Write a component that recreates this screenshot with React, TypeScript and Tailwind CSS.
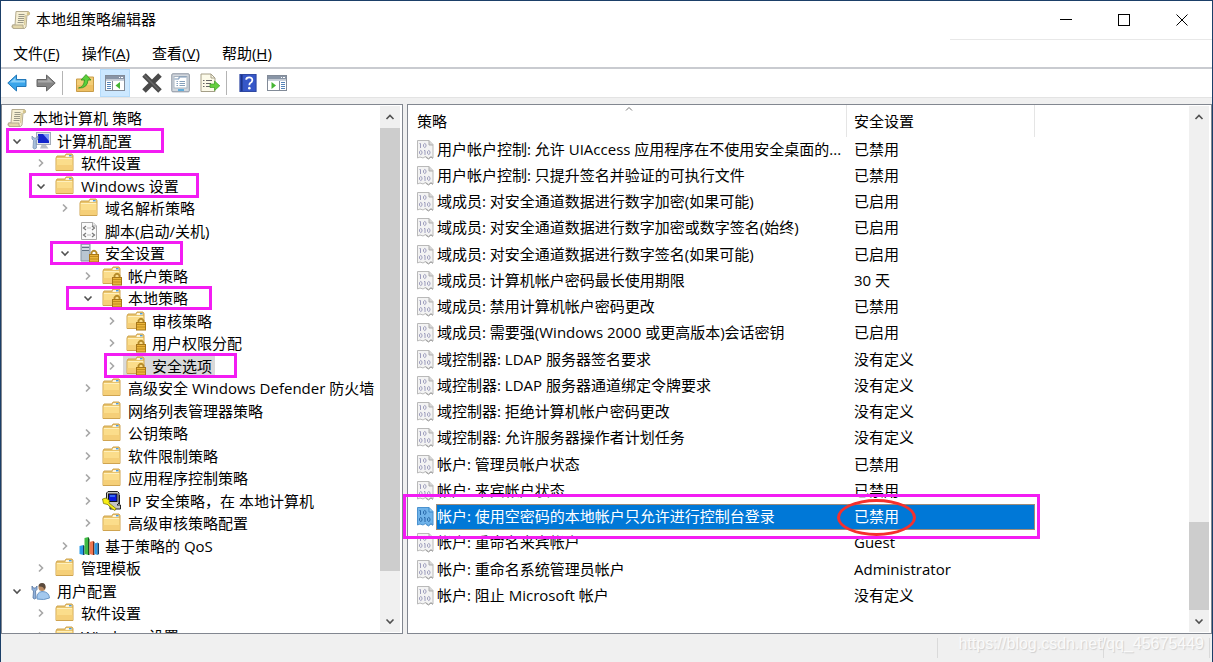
import { useState } from "react";
import type { ReactNode } from "react";

type IconName =
    | "scroll"
    | "computer"
    | "folder"
    | "script"
    | "server"
    | "lockedFolder"
    | "ipsec"
    | "chart"
    | "user";

type TreeNode = {
    label: string;
    level: number;
    icon: IconName;
    state?: "open" | "closed";
    mark?: string;
};

const tree: TreeNode[] = [
    { label: "本地计算机 策略", level: 0, icon: "scroll" },
    { label: "计算机配置", level: 1, icon: "computer", state: "open", mark: "left-1 w-[158px]" },
    { label: "软件设置", level: 2, icon: "folder", state: "closed" },
    { label: "Windows 设置", level: 2, icon: "folder", state: "open", mark: "left-[27px] w-[170px]" },
    { label: "域名解析策略", level: 3, icon: "folder", state: "closed" },
    { label: "脚本(启动/关机)", level: 3, icon: "script" },
    { label: "安全设置", level: 3, icon: "server", state: "open", mark: "left-12 w-[133px]" },
    { label: "帐户策略", level: 4, icon: "lockedFolder", state: "closed" },
    { label: "本地策略", level: 4, icon: "lockedFolder", state: "open", mark: "left-16 w-[146px]" },
    { label: "审核策略", level: 5, icon: "lockedFolder", state: "closed" },
    { label: "用户权限分配", level: 5, icon: "lockedFolder", state: "closed" },
    { label: "安全选项", level: 5, icon: "lockedFolder", state: "closed", mark: "left-[102px] w-[133px]" },
    { label: "高级安全 Windows Defender 防火墙", level: 4, icon: "folder", state: "closed" },
    { label: "网络列表管理器策略", level: 4, icon: "folder" },
    { label: "公钥策略", level: 4, icon: "folder", state: "closed" },
    { label: "软件限制策略", level: 4, icon: "folder", state: "closed" },
    { label: "应用程序控制策略", level: 4, icon: "folder", state: "closed" },
    { label: "IP 安全策略，在 本地计算机", level: 4, icon: "ipsec", state: "closed" },
    { label: "高级审核策略配置", level: 4, icon: "folder", state: "closed" },
    { label: "基于策略的 QoS", level: 3, icon: "chart", state: "closed" },
    { label: "管理模板", level: 2, icon: "folder", state: "closed" },
    { label: "用户配置", level: 1, icon: "user", state: "open" },
    { label: "软件设置", level: 2, icon: "folder", state: "closed" },
    { label: "Windows 设置", level: 2, icon: "folder", state: "closed" },
];

const indent = ["pl-0.5", "pl-2", "pl-8", "pl-14", "pl-[79px]", "pl-[103px]"];

const policies = [
    { name: "用户帐户控制: 允许 UIAccess 应用程序在不使用安全桌面的...", value: "已禁用" },
    { name: "用户帐户控制: 只提升签名并验证的可执行文件", value: "已禁用" },
    { name: "域成员: 对安全通道数据进行数字加密(如果可能)", value: "已启用" },
    { name: "域成员: 对安全通道数据进行数字加密或数字签名(始终)", value: "已启用" },
    { name: "域成员: 对安全通道数据进行数字签名(如果可能)", value: "已启用" },
    { name: "域成员: 计算机帐户密码最长使用期限", value: "30 天" },
    { name: "域成员: 禁用计算机帐户密码更改", value: "已禁用" },
    { name: "域成员: 需要强(Windows 2000 或更高版本)会话密钥", value: "已启用" },
    { name: "域控制器: LDAP 服务器签名要求", value: "没有定义" },
    { name: "域控制器: LDAP 服务器通道绑定令牌要求", value: "没有定义" },
    { name: "域控制器: 拒绝计算机帐户密码更改", value: "没有定义" },
    { name: "域控制器: 允许服务器操作者计划任务", value: "没有定义" },
    { name: "帐户: 管理员帐户状态", value: "已禁用" },
    { name: "帐户: 来宾帐户状态", value: "已禁用" },
    { name: "帐户: 使用空密码的本地帐户只允许进行控制台登录", value: "已禁用" },
    { name: "帐户: 重命名来宾帐户", value: "Guest" },
    { name: "帐户: 重命名系统管理员帐户", value: "Administrator" },
    { name: "帐户: 阻止 Microsoft 帐户", value: "没有定义" },
];

const menus = [
    { label: "文件", hotkey: "F" },
    { label: "操作", hotkey: "A" },
    { label: "查看", hotkey: "V" },
    { label: "帮助", hotkey: "H" },
];

const Svg = ({ children, className = "size-5" }: { children: ReactNode; className?: string }) => (
    <svg viewBox="0 0 20 20" fill="none" aria-hidden="true" className={`shrink-0 ${className}`}>
        {children}
    </svg>
);

const FolderShape = () => (
    <>
        <path d="M1 5V17.5H18V2.5L17 1H11L10 3H2Z" fill="#e9c46b" stroke="#cfa450" />
        <path d="M11 2H16.5V4H10.5Z" fill="#fdf6de" />
        <path d="M14 2H16.5V3.4H14Z" fill="#4d9de0" />
        <path d="M1.5 5H17.5V17H1.5Z" fill="#fbdd8b" />
        <path d="M1.5 12H17.5V17H1.5Z" fill="#f5cf78" />
        <path d="M2 5.5H17" stroke="#fff0bd" />
    </>
);

const PaneWindow = ({ flip = false }: { flip?: boolean }) => (
    <Svg>
        <rect x="0.5" y="2.5" width="19" height="15" fill="#fff" stroke="#828b98" />
        <path d="M1 3H19V6.5H1Z" fill="#8995a6" />
        <path d="M14 4.5H15M16 4.5H18" stroke="#fff" />
        <path d="M1 7.5H19" stroke="#c9d1dc" />
        <path d={flip ? "M12.5 8V17" : "M7.5 8V17"} stroke="#828b98" />
        <path
            d={flip ? "M14 9.5H18M14 11.5H18M14 13.5H18M14 15.5H18" : "M2 9.5H6M2 11.5H6M2 13.5H6M2 15.5H6"}
            stroke="#5583b7"
        />
        <path d={flip ? "M4.5 9L9 12.5L4.5 16Z" : "M15 9L10.5 12.5L15 16Z"} fill="#45b533" />
    </Svg>
);

const Lock = () => (
    <>
        <path d="M12.5 12V9.5Q15 6 17.5 9.5V12" stroke="#b58a28" strokeWidth="1.8" />
        <rect x="10.5" y="11.5" width="9" height="7.5" fill="#eab53a" stroke="#a87718" />
        <path d="M11 13.5H19M11 16H19" stroke="#c08b1d" />
    </>
);

const TreeIcon = ({ name }: { name: IconName }) => {
    switch (name) {
        case "scroll":
            return (
                <Svg>
                    <path d="M5 1.5H17.5Q19.5 3 18 5H16L15 17Q14 19 12 18.5H2Q0 17 1.5 15H4Z" fill="#f6efd3" stroke="#b5ac90" />
                    <path d="M1.5 15H12Q11.5 17.5 13 18.5H3Q1 17.5 1.5 15Z" fill="#e3d7aa" stroke="#b5ac90" />
                    <path d="M16 5Q15 3 17 1.5Q19.5 3 18 5Z" fill="#d5c48b" />
                    <path d="M14.5 5L13.5 15" stroke="#dccf9f" strokeWidth="1.5" />
                    <path d="M7.5 4.5H13.5M7.5 6.5H13.5M7 8.5H13M7 10.5H13M6.5 12.5H12.5" stroke="#9a9887" />
                </Svg>
            );
        case "computer":
            return (
                <Svg>
                    <rect x="5.5" y="1.5" width="14" height="12" fill="#e3e6ec" stroke="#a3abb9" />
                    <rect x="7" y="3" width="11" height="9" fill="#1326cc" />
                    <path d="M12 3H18V10Z" fill="#7e9cf5" />
                    <path d="M10.5 14H15L17.5 17.5H9Z" fill="#b9bec7" />
                    <path d="M1 5V8L2.5 9.5L2 17Q3.5 19 5.5 17L5 9.5L7 8V5L5.5 7H3Z" fill="#a9c0db" stroke="#7d95b5" strokeWidth="0.8" />
                </Svg>
            );
        case "script":
            return (
                <Svg>
                    <path d="M2.5 1.5H14L17.5 5V18.5H2.5Z" fill="#fafafa" stroke="#a9a9a9" />
                    <path d="M13.5 1.5V5H17.5" stroke="#a9a9a9" fill="#e8e8e8" />
                    <path d="M7 5L4.5 7L7 9M13 5L15.5 7L13 9M8.5 7H9.5M10.5 7H11.5M7 12L4.5 14L7 16M13 12L15.5 14L13 16M8.5 14H9.5M10.5 14H11.5" stroke="#777" strokeWidth="1.2" />
                </Svg>
            );
        case "server":
            return (
                <Svg>
                    <path d="M2 1H11V18H2Z" fill="#b9c5d1" stroke="#8593a3" />
                    <path d="M3 4.5H10M3 7.5H10" stroke="#5f7184" />
                    <path d="M3 2.5H10M3 6H10" stroke="#eef3f7" />
                    <Lock />
                </Svg>
            );
        case "lockedFolder":
            return (
                <Svg>
                    <FolderShape />
                    <Lock />
                </Svg>
            );
        case "ipsec":
            return (
                <Svg>
                    <path d="M6 0.5H15.500L17 2V12L15 14H18.5V18H8V14L4.5 12.5V2Z" fill="#c4c4c4" stroke="#222" />
                    <path d="M17.5 4V13.5" stroke="#222" />
                    <rect x="6.5" y="3" width="8.5" height="7.5" fill="#0a1be0" stroke="#111" />
                    <path d="M8 5H13" stroke="#5ab6ff" />
                    <path d="M0.5 8L4 7L7.5 9.5L7 12L14 17.5L13 19.5L10.5 18L5.5 13.5L1.5 12.5Z" fill="#f7ee16" stroke="#6f6a00" strokeWidth="0.7" />
                </Svg>
            );
        case "chart":
            return (
                <Svg>
                    <path d="M0.5 10L4.5 9V19L0.5 18Z" fill="#2a9be8" />
                    <path d="M4 9L5.5 10V19H4Z" fill="#123e66" />
                    <path d="M5.5 2L9.5 1V19L5.5 18Z" fill="#3ebb44" />
                    <path d="M9 1L10.5 3V19H9Z" fill="#14501c" />
                    <path d="M10.5 6L14 5V19L10.5 18Z" fill="#ef7650" />
                    <path d="M14 5L15.5 6V19H14Z" fill="#6b2a1b" />
                    <path d="M15.5 7.5L18.5 6.5V19L15.5 18Z" fill="#2a9be8" />
                    <path d="M18.5 6.5L20 7.5V18L18.5 19Z" fill="#123e66" />
                </Svg>
            );
        case "user":
            return (
                <Svg>
                    <path d="M6 18Q5.5 11 11 10.5Q18 10.5 18.5 17Q13 19.5 6 18Z" fill="#a3c8ee" stroke="#6b97c6" />
                    <circle cx="11" cy="6.5" r="3.5" fill="#b98a62" />
                    <path d="M7.5 5.5Q7.5 2 11 2Q15 2 14.5 7L13 8.5Q13 5 7.5 5.5Z" fill="#5a4a3d" />
                    <path d="M1 5V8.5L2.5 10L2 17Q3.5 19 5 17L4.5 10L6 8.5V5L4.5 7H2.5Z" fill="#8fb1dc" stroke="#55749e" strokeWidth="0.8" />
                </Svg>
            );
        default:
            return (
                <Svg>
                    <FolderShape />
                </Svg>
            );
    }
};

const PolicyIcon = ({ selected }: { selected: boolean }) => (
    <Svg>
        <path
            d="M1.5 0.5H13L17 4.500V18L15 16.5L12.500 18.500L9.5 16.500L7 18L4 17L1.5 18Z"
            fill={selected ? "#6fb3ea" : "#f3f3f3"}
            stroke={selected ? "#4a92cf" : "#b9b9b9"}
        />
        <path d="M13 0.5V5H17" stroke={selected ? "#3a86c8" : "#adadad"} fill={selected ? "#8cc4f0" : "#d6d6d6"} />
        <path d="M9.500 17L12.500 19L15 17L17 18.500" stroke={selected ? "#4a92cf" : "#9f9f9f"} />
        <path
            d="M3.500 3.500H4.500V8M7.500 4.500Q8.750 2.500 10 4.500V6.500Q8.750 8.500 7.500 6.500ZM3.500 11.500Q4.750 9.500 6 11.500V13.500Q4.750 15.500 3.500 13.500ZM8 10.500H9V15M11.500 11.500Q12.750 9.500 14 11.500V13.500Q12.750 15.500 11.500 13.500Z"
            stroke={selected ? "#2667a8" : "#9c9cbc"}
        />
    </Svg>
);

const Chevron = ({ dir }: { dir: "up" | "down" | "right" }) => {
    const paths = { up: "M3.5 9L7 5.5L10.5 9", down: "M3.5 5.5L7 9L10.5 5.5", right: "M5 3.5L8.5 7L5 10.5" };
    return (
        <svg viewBox="0 0 14 14" fill="none" aria-hidden="true" className="size-3.5 shrink-0">
            <path d={paths[dir]} stroke={dir === "right" ? "#a6a6a6" : "#505050"} strokeWidth="1.6" />
        </svg>
    );
};

const ScrollBar = ({ thumb }: { thumb: ReactNode }) => (
    <div className="my-px mr-0.5 flex w-5 shrink-0 flex-col bg-[#f0f0f0]">
        <button aria-label="向上滚动" className="flex h-[22px] items-center justify-center">
            <Chevron dir="up" />
        </button>
        <div className="flex flex-1 flex-col">{thumb}</div>
        <button aria-label="向下滚动" className="flex h-[22px] items-center justify-center">
            <Chevron dir="down" />
        </button>
    </div>
);

const TitleBar = () => (
    <header className="flex h-[38px] shrink-0 items-center bg-white pr-px pl-2.5">
        <TreeIcon name="scroll" />
        <h1 className="flex-1 pb-0.5 pl-[5px]">本地组策略编辑器</h1>
        <button aria-label="最小化" className="flex h-full w-[58px] items-center justify-center">
            <svg viewBox="0 0 12 12" className="size-3" stroke="#000">
                <path d="M0 5.5H12" />
            </svg>
        </button>
        <button aria-label="最大化" className="flex h-full w-[58px] items-center justify-center">
            <svg viewBox="0 0 12 12" className="size-3" stroke="#000" fill="none">
                <rect x="0.5" y="0.5" width="11" height="11" />
            </svg>
        </button>
        <button aria-label="关闭" className="flex h-full w-[58px] items-center justify-center">
            <svg viewBox="0 0 12 12" className="size-3" stroke="#000">
                <path d="M0.5 0.5L11.5 11.5M11.5 0.5L0.5 11.5" />
            </svg>
        </button>
    </header>
);

const ToolBar = () => (
    <div className="flex h-[29px] shrink-0 items-center border-b border-[#e3e3e3] bg-white pl-1.5">
        <button aria-label="后退">
            <Svg>
                <path d="M0.8 10L9.5 2V6.5H19V13.5H9.5V18Z" fill="#3aa5ea" stroke="#2277b8" />
                <path d="M3 9.5L8.5 4.5V7.5H18V9.5Z" fill="#8ad0f8" />
            </Svg>
        </button>
        <button aria-label="前进" className="ml-[9px]">
            <Svg>
                <path d="M19.2 10L10.5 2V6.5H1V13.5H10.5V18Z" fill="#858585" stroke="#666" />
                <path d="M17 9.5L11.5 4.5V7.5H2V9.5Z" fill="#ababab" />
            </Svg>
        </button>
        <span className="ml-1.5 h-6 w-px bg-[#b4b4b4]" />
        <button aria-label="上移一级" className="ml-3">
            <Svg>
                <path d="M1.5 6V18.5H18.5V4H12L10.5 6Z" fill="#f3cd76" stroke="#c89c48" />
                <path d="M2 12H18V18H2Z" fill="#eebf62" />
                <path d="M3.5 15Q9 14 9.5 7H6L11 1.5L16 7H13Q12.5 15.5 3.5 15Z" fill="#5bd03b" stroke="#338f21" strokeWidth="0.8" />
            </Svg>
        </button>
        <button aria-label="显示/隐藏控制台树" className="ml-[5px] flex h-7 w-[30px] items-center justify-center border border-[#b5dbfa] bg-[#cce8ff]">
            <PaneWindow />
        </button>
        <button aria-label="删除" className="ml-3">
            <Svg>
                <path d="M2 2L18 18M18 2L2 18" stroke="#4a4a4a" strokeWidth="5" />
                <path d="M2 2L17 17" stroke="#686868" strokeWidth="1.5" />
            </Svg>
        </button>
        <button aria-label="属性" className="ml-[9px]">
            <Svg>
                <rect x="0.8" y="0.8" width="17.5" height="18" rx="1" fill="#d3d8de" stroke="#89929e" />
                <rect x="3" y="3.5" width="13" height="11.5" fill="#fff" stroke="#a8b3bf" />
                <path d="M3.5 6H8V4H15.5" stroke="#7794b5" />
                <path d="M5.5 8.5H7M8.5 8.5H14M5.5 10.5H7M8.5 10.5H14M5.5 12.5H7M8.5 12.5H14" stroke="#86a0bb" />
                <path d="M7 17H13" stroke="#3aa1dd" strokeWidth="1.5" />
            </Svg>
        </button>
        <button aria-label="导出列表" className="ml-[9px]">
            <Svg>
                <path d="M1 1H11L15 5V18.5H1Z" fill="#fcfae9" stroke="#a59f88" />
                <path d="M11 1V5H15" stroke="#a59f88" />
                <path d="M3 7.5H4.5M6 7.5H12M3 10.5H4.5M6 10.5H11M3 13.5H4.5M6 13.5H11" stroke="#666" />
                <path d="M10 11H14.5V8L19.8 12.8L14.5 17.5V14.5H10Z" fill="#65ce3e" stroke="#399f24" strokeWidth="0.7" />
            </Svg>
        </button>
        <span className="ml-1.5 h-6 w-px bg-[#b4b4b4]" />
        <button aria-label="帮助主题" className="ml-3">
            <Svg className="h-5 w-[18px]">
                <rect x="1" y="0.5" width="18" height="19" fill="#3657c8" stroke="#26409c" />
                <path d="M3 1V19" stroke="#1d3489" strokeWidth="2" />
                <path d="M8 6.5Q8 3.8 11.3 3.8Q15 3.8 14.8 7Q14.5 9 12.5 10Q11.5 10.7 11.5 12.5" stroke="#fff" strokeWidth="2" />
                <circle cx="11.5" cy="15.7" r="1.4" fill="#fff" />
            </Svg>
        </button>
        <button aria-label="显示/隐藏操作窗格" className="ml-2.5">
            <PaneWindow flip />
        </button>
    </div>
);

const ConsoleTree = ({ active, onSelect }: { active: number; onSelect: (i: number) => void }) => (
    <nav className="flex w-[402px] shrink-0 border border-[#828790] bg-white" aria-label="控制台树">
        <div className="relative min-w-0 flex-1 overflow-hidden">
            <ul role="tree" className="absolute inset-x-0 top-0.5">
                {tree.map((node, i) => (
                    <li
                        key={i}
                        role="treeitem"
                        aria-selected={i === active}
                        onClick={() => onSelect(i)}
                        className={`relative flex h-[22px] items-center whitespace-nowrap even:h-[23px] ${indent[node.level]}`}
                    >
                        {node.level > 0 && (
                            <span className="mr-1 w-3.5">
                                {node.state && <Chevron dir={node.state === "open" ? "down" : "right"} />}
                            </span>
                        )}
                        <span className={`flex h-full items-center gap-1.5 px-[3px] ${i === active ? "bg-[#d9d9d9]" : ""}`}>
                            <TreeIcon name={node.icon} />
                            {node.label}
                        </span>
                        {node.mark && (
                            <span className={`pointer-events-none absolute -inset-y-px border-3 border-[#f31cf3] ${node.mark}`} />
                        )}
                    </li>
                ))}
            </ul>
        </div>
        <ScrollBar thumb={<div className="h-[92%] bg-[#cdcdcd]" />} />
    </nav>
);

const PolicyList = ({ active, onSelect }: { active: number; onSelect: (i: number) => void }) => (
    <main className="flex min-w-0 flex-1 border border-[#828790] bg-white">
        <div className="min-w-0 flex-1">
            <table className="w-[627px] table-fixed border-separate border-spacing-0 text-left">
                <thead>
                    <tr className="h-8">
                        <th className="relative w-[439px] border-r border-[#e5e5e5] pl-[9px] font-normal">
                            策略
                            <svg viewBox="0 0 8 4" fill="none" stroke="#777" className="absolute top-0.5 left-1/2 -ml-0.5 h-1 w-2">
                                <path d="M1 3.5L4 0.5L7 3.5" />
                            </svg>
                        </th>
                        <th className="border-r border-[#e5e5e5] pl-[7px] font-normal">安全设置</th>
                    </tr>
                </thead>
                <tbody>
                    {policies.map((policy, i) => {
                        const selected = i === active;
                        return (
                            <tr
                                key={policy.name}
                                onClick={() => onSelect(i)}
                                className={`h-[26px] nth-[4n]:h-[27px] ${selected ? "text-white" : ""}`}
                            >
                                <td className="relative p-0 align-top">
                                    <div className="flex h-[26px] items-center pl-2">
                                        <PolicyIcon selected={selected} />
                                        <span
                                            className={`flex h-full min-w-0 flex-1 items-center border-y border-l pb-0.5 whitespace-nowrap ${
                                                selected ? "border-[#9c8b7a] bg-[#0078d7]" : "border-transparent"
                                            }`}
                                        >
                                            {policy.name}
                                        </span>
                                    </div>
                                    {selected && (
                                        <span className="pointer-events-none absolute top-[-10px] left-[-5px] z-10 h-[45px] w-[637px] border-3 border-[#f31cf3]" />
                                    )}
                                </td>
                                <td className="relative p-0 align-top">
                                    <div
                                        className={`flex h-[26px] items-center border-y border-r pb-0.5 pl-[7px] ${
                                            selected ? "border-[#9c8b7a] bg-[#0078d7]" : "border-transparent"
                                        }`}
                                    >
                                        {policy.value}
                                    </div>
                                    {selected && (
                                        <span className="pointer-events-none absolute top-[-5px] left-[-10px] z-20 h-[37px] w-[79px] rounded-[50%] border-3 border-[#f5302d]" />
                                    )}
                                </td>
                            </tr>
                        );
                    })}
                </tbody>
            </table>
        </div>
        <ScrollBar
            thumb={
                <>
                    <div className="flex-1" />
                    <div className="h-[88px] bg-[#cdcdcd]" />
                </>
            }
        />
    </main>
);

const App = () => {
    const [node, setNode] = useState(11);
    const [policy, setPolicy] = useState(14);

    return (
        <div className="flex h-screen flex-col overflow-hidden border-x border-t border-[#1b3f68] bg-[#f0f0f0] font-['Open_Sans','Noto_Sans_CJK_SC',sans-serif] text-[15px] leading-5 text-black">
            <TitleBar />
            <div className="flex shrink-0 justify-end bg-white">
                <hr className="w-[262px] border-[#e8e8e8]" />
            </div>
            <div className="flex h-[27px] shrink-0 items-center gap-[22px] bg-white pb-0.5 pl-3">
                {menus.map((menu) => (
                    <button key={menu.hotkey}>
                        {menu.label}(<u>{menu.hotkey}</u>)
                    </button>
                ))}
            </div>
            <div className="h-0.5 shrink-0 bg-[#c9cbd0]" />
            <ToolBar />
            <div className="mt-1.5 flex min-h-0 flex-1 gap-1">
                <ConsoleTree active={node} onSelect={setNode} />
                <PolicyList active={policy} onSelect={setPolicy} />
            </div>
            <footer className="relative flex h-7 shrink-0 justify-end py-1">
                <span className="w-[166px] border-l border-[#dadada]" />
                <span className="mr-0.5 w-[107px] border-x border-[#dadada]" />
                <span className="absolute top-0 right-2 font-['Liberation_Sans',sans-serif] text-[16px] text-[#fafafa] [text-shadow:1px_1px_1px_#cfcfcf]">
                    https://blog.csdn.net/qq_45675449
                </span>
            </footer>
        </div>
    );
};

export default App;
